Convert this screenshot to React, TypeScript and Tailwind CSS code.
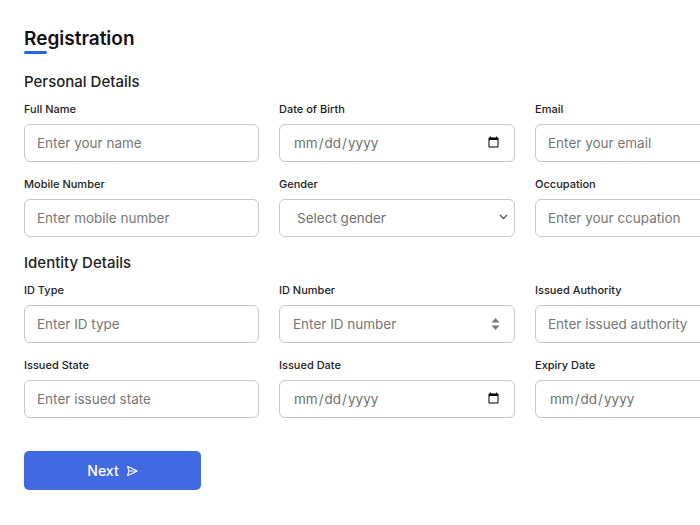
import React from "react";
import { SendHorizontal } from "lucide-react";

const font = { fontFamily: "Inter, 'Noto Sans', sans-serif" };

function Label({ children }: { children: React.ReactNode }) {
  return <label className="block text-[11px] leading-[14px] font-medium text-[#222] mb-2">{children}</label>;
}

const baseCls =
  "block w-full h-[38px] rounded-[6px] border border-[#c8c8c8] bg-white text-[13.5px] placeholder:text-[#777] outline-none";

function TextField({ label, placeholder }: { label: string; placeholder: string }) {
  return (
    <div>
      <Label>{label}</Label>
      <input type="text" placeholder={placeholder} className={baseCls + " px-3 text-[#333]"} />
    </div>
  );
}

function DateField({ label }: { label: string }) {
  return (
    <div>
      <Label>{label}</Label>
      <input type="date" className={baseCls + " pl-[13px] pr-3 text-[#707070]"} />
    </div>
  );
}

function NumberField({ label, placeholder }: { label: string; placeholder: string }) {
  return (
    <div>
      <Label>{label}</Label>
      <div className="relative">
        <input type="text" placeholder={placeholder} className={baseCls + " px-[13px] text-[#333]"} />
        <svg className="absolute right-[15px] top-[12px]" width="9" height="14" viewBox="0 0 9 14">
          <path d="M4.5 1 L8.5 5.5 H0.5 Z" fill="#777" />
          <path d="M4.5 13 L8.5 8.5 H0.5 Z" fill="#777" />
        </svg>
      </div>
    </div>
  );
}

function SelectField({ label }: { label: string }) {
  return (
    <div>
      <Label>{label}</Label>
      <div className="relative">
        <select className={baseCls + " appearance-none pl-[17px] pr-8 text-[#707070]"} defaultValue="">
          <option value="" disabled>
            Select gender
          </option>
          <option>Male</option>
          <option>Female</option>
        </select>
        <svg className="absolute right-[7px] top-[15px] pointer-events-none" width="9" height="6" viewBox="0 0 9 6">
          <path d="M1 1 L4.5 4.5 L8 1" fill="none" stroke="#555" strokeWidth="1.3" />
        </svg>
      </div>
    </div>
  );
}

export default function App() {
  return (
    <div className="w-[700px] h-[525px] overflow-hidden bg-white" style={font}>
      <div className="pt-[27px] pl-6 w-[800px]">
        <h1 className="text-[19px] leading-6 font-semibold text-[#111]">Registration</h1>
        <div className="h-[3px] w-[23px] bg-[#2563eb] rounded-full" />
        <h2 className="mt-[18px] text-[15px] leading-5 font-medium text-[#222]">Personal Details</h2>
        <div className="mt-[10px] grid grid-cols-[235px_236px_235px] gap-x-5 gap-y-[15px]">
          <TextField label="Full Name" placeholder="Enter your name" />
          <DateField label="Date of Birth" />
          <TextField label="Email" placeholder="Enter your email" />
          <TextField label="Mobile Number" placeholder="Enter mobile number" />
          <SelectField label="Gender" />
          <TextField label="Occupation" placeholder="Enter your ccupation" />
        </div>
        <h2 className="mt-4 text-[15px] leading-5 font-medium text-[#222]">Identity Details</h2>
        <div className="mt-[10px] grid grid-cols-[235px_236px_235px] gap-x-5 gap-y-[15px]">
          <TextField label="ID Type" placeholder="Enter ID type" />
          <NumberField label="ID Number" placeholder="Enter ID number" />
          <TextField label="Issued Authority" placeholder="Enter issued authority" />
          <TextField label="Issued State" placeholder="Enter issued state" />
          <DateField label="Issued Date" />
          <DateField label="Expiry Date" />
        </div>
        <button
          className="mt-[33px] flex h-[39px] w-[177px] items-center justify-center gap-[7px] rounded-[5px] bg-[#4169e1] text-[14px] font-medium text-white"
          style={{ fontFamily: "Inter, sans-serif" }}
        >
          Next
          <SendHorizontal size={12} strokeWidth={2.2} />
        </button>
      </div>
    </div>
  );
}
